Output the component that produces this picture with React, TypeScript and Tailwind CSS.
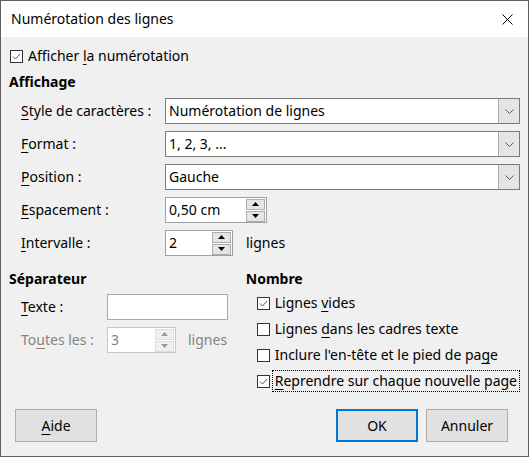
import type { ReactNode } from 'react'

function Check({ checked }: { checked?: boolean }) {
  return (
    <span className="w-[13px] h-[13px] border border-[#333] bg-white flex items-center justify-center shrink-0">
      {checked && (
        <svg width="11" height="11" viewBox="0 0 11 11">
          <path d="M2 5.5 L4.5 8 L9 3" fill="none" stroke="#555" strokeWidth="1" />
        </svg>
      )}
    </span>
  )
}

function U({ children }: { children: ReactNode }) {
  return <span className="underline underline-offset-[3px] decoration-1">{children}</span>
}

function Select({ value }: { value: string }) {
  return (
    <div className="flex-1 h-[26px] border border-[#7a7a7a] bg-white flex items-center">
      <span className="pl-[3px] flex-1">{value}</span>
      <span className="w-[21px] h-[24px] bg-[#e5e5e5] border-l border-[#adadad] flex items-center justify-center">
        <svg width="9" height="5" viewBox="0 0 9 5">
          <path d="M0.5 0.5 L4.5 4.5 L8.5 0.5" fill="none" stroke="#555" strokeWidth="1" />
        </svg>
      </span>
    </div>
  )
}

function Spin({ value, width, disabled }: { value: string; width: string; disabled?: boolean }) {
  const tri = disabled ? '#9a9a9a' : '#000'
  return (
    <div className={`${width} h-[26px] border ${disabled ? 'border-[#c8c8c8] text-[#838383]' : 'border-[#a0a0a0]'} bg-white flex items-center`}>
      <span className="pl-[3px] flex-1">{value}</span>
      <span className="flex flex-col gap-[1px] mr-[1px]">
        <span className={`w-[19px] h-[11px] border ${disabled ? 'border-[#dcdcdc] bg-[#f0f0f0]' : 'border-[#adadad] bg-[#e5e5e5]'} flex items-center justify-center`}>
          <svg width="7" height="4" viewBox="0 0 7 4"><path d="M0 4 L3.5 0 L7 4 Z" fill={tri} /></svg>
        </span>
        <span className={`w-[19px] h-[11px] border ${disabled ? 'border-[#dcdcdc] bg-[#f0f0f0]' : 'border-[#adadad] bg-[#e5e5e5]'} flex items-center justify-center`}>
          <svg width="7" height="4" viewBox="0 0 7 4"><path d="M0 0 L3.5 4 L7 0 Z" fill={tri} /></svg>
        </span>
      </span>
    </div>
  )
}

function Row({ label, children }: { label: ReactNode; children: ReactNode }) {
  return (
    <div className="flex items-center h-[26px]">
      <span className="w-[156px] pl-[12px]">{label}</span>
      {children}
    </div>
  )
}

export default function App() {
  return (
    <div className="w-[529px] h-[457px] border border-[#5f5f5f] bg-[#f0f0f0] flex flex-col font-['Noto_Sans',sans-serif] text-[14px] text-black leading-none whitespace-nowrap">
      <div className="h-[36px] bg-white flex items-center justify-between pl-[10px] pr-[15px]">
        <span className="text-[14px]">Numérotation des lignes</span>
        <svg width="11" height="11" viewBox="0 0 11 11">
          <path d="M0.5 0.5 L10.5 10.5 M10.5 0.5 L0.5 10.5" stroke="#000" strokeWidth="1" />
        </svg>
      </div>

      <div className="flex-1 flex flex-col px-[8px]">
        <div className="mt-[9px] h-[20px] flex items-center gap-[5px] pl-[1px]">
          <Check checked />
          <span>Afficher <U>l</U>a numérotation</span>
        </div>

        <div className="mt-[6px] h-[20px] flex items-center font-bold">Affichage</div>

        <div className="mt-[6px] flex flex-col gap-[7px]">
          <Row label={<><U>S</U>tyle de caractères :</>}>
            <Select value="Numérotation de lignes" />
          </Row>
          <Row label={<><U>F</U>ormat :</>}>
            <Select value="1, 2, 3, ..." />
          </Row>
          <Row label={<><U>P</U>osition :</>}>
            <Select value="Gauche" />
          </Row>
          <Row label={<><U>E</U>spacement :</>}>
            <Spin value="0,50 cm" width="w-[102px]" />
          </Row>
          <Row label={<><U>I</U>ntervalle :</>}>
            <Spin value="2" width="w-[68px]" />
            <span className="ml-[13px]">lignes</span>
          </Row>
        </div>

        <div className="mt-[13px] flex">
          <div className="w-[238px] flex flex-col">
            <div className="h-[20px] flex items-center font-bold">Séparateur</div>
            <div className="mt-[5px] flex flex-col gap-[7px]">
              <div className="flex items-center h-[26px]">
                <span className="w-[98px] pl-[12px]"><U>T</U>exte :</span>
                <div className="w-[121px] h-[26px] border border-[#a9a9a9] bg-white" />
              </div>
              <div className="flex items-center h-[26px] text-[#838383]">
                <span className="w-[98px] pl-[12px]">To<U>u</U>tes les :</span>
                <Spin value="3" width="w-[69px]" disabled />
                <span className="ml-[12px]">lignes</span>
              </div>
            </div>
          </div>

          <div className="flex-1 flex flex-col">
            <div className="h-[20px] flex items-center font-bold">Nombre</div>
            <div className="mt-[3px] flex flex-col gap-[4px] pl-[11px]">
              <div className="h-[22px] flex items-center gap-[4px]">
                <Check checked />
                <span className="px-[1px]">Lignes <U>v</U>ides</span>
              </div>
              <div className="h-[22px] flex items-center gap-[4px]">
                <Check />
                <span className="px-[1px]">Lignes <U>d</U>ans les cadres texte</span>
              </div>
              <div className="h-[22px] flex items-center gap-[4px]">
                <Check />
                <span className="px-[1px]">Inclure l'en-tête et le pied de pa<U>g</U>e</span>
              </div>
              <div className="h-[22px] flex items-center gap-[2px]">
                <Check checked />
                <span className="h-[22px] flex items-center px-[2px] border border-dotted border-black"><U>R</U>eprendre sur chaque nouvelle page</span>
              </div>
            </div>
          </div>
        </div>

        <div className="mt-auto mb-[14px] flex items-center">
          <button className="ml-[6px] w-[82px] h-[33px] bg-[#e1e1e1] border border-[#adadad]"><U>A</U>ide</button>
          <div className="flex-1" />
          <button className="w-[82px] h-[33px] bg-[#e1e1e1] border-2 border-[#0078d7]">OK</button>
          <button className="ml-[8px] mr-[12px] w-[82px] h-[33px] bg-[#e1e1e1] border border-[#adadad]">Annuler</button>
        </div>
      </div>
    </div>
  )
}
